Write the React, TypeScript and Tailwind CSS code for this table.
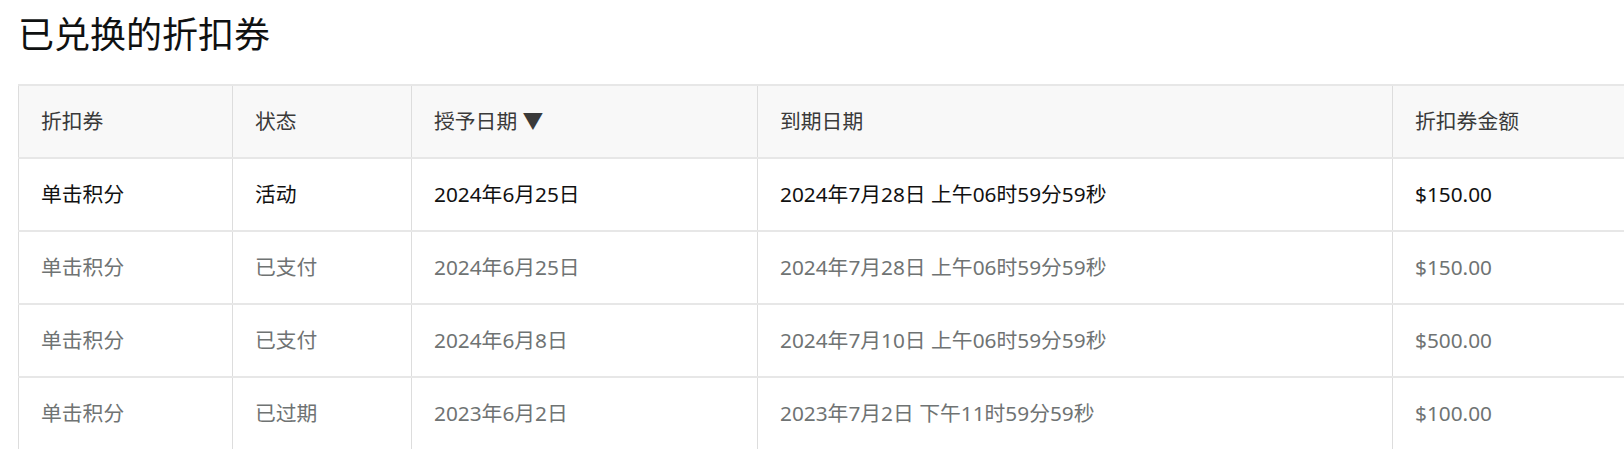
const columns = [
  { label: '折扣券', width: 'w-[214px]' },
  { label: '状态', width: 'w-[179px]' },
  { label: '授予日期 ▼', width: 'w-[346px]' },
  { label: '到期日期', width: 'w-[635px]' },
  { label: '折扣券金额', width: 'w-[420px]' },
]

const rows = [
  { active: true, cells: ['单击积分', '活动', '2024年6月25日', '2024年7月28日 上午06时59分59秒', '$150.00'] },
  { active: false, cells: ['单击积分', '已支付', '2024年6月25日', '2024年7月28日 上午06时59分59秒', '$150.00'] },
  { active: false, cells: ['单击积分', '已支付', '2024年6月8日', '2024年7月10日 上午06时59分59秒', '$500.00'] },
  { active: false, cells: ['单击积分', '已过期', '2023年6月2日', '2023年7月2日 下午11时59分59秒', '$100.00'] },
]

export default function App() {
  return (
    <div
      className="w-[1624px] h-[456px] overflow-hidden bg-white"
      style={{ fontFamily: '"Noto Sans", "Noto Sans CJK SC", sans-serif' }}
    >
      <h1 className="pl-[18px] pt-[13px] h-[84px] text-[36px] leading-[44px] font-normal text-[#0f1111]">
        已兑换的折扣券
      </h1>

      <div className="ml-[18px] w-[1800px] text-[20.8px]">
        {/* Header */}
        <div className="flex h-[73px] border-t-2 border-[#e7e7e7] bg-[#f8f8f8] text-[#3a3a3a]">
          {columns.map((col) => (
            <div
              key={col.label}
              className={`${col.width} shrink-0 flex items-center pl-[22px] border-l border-[#dddddd]`}
            >
              {col.label}
            </div>
          ))}
        </div>

        {/* Rows */}
        {rows.map((row, i) => (
          <div
            key={i}
            className={`flex h-[73px] border-t-2 border-[#e7e7e7] ${
              row.active ? 'text-[#111111]' : 'text-[#6f7373]'
            }`}
          >
            {row.cells.map((cell, j) => (
              <div
                key={j}
                className={`${columns[j].width} shrink-0 flex items-center pl-[22px] border-l border-[#dddddd]`}
              >
                {cell}
              </div>
            ))}
          </div>
        ))}
      </div>
    </div>
  )
}
